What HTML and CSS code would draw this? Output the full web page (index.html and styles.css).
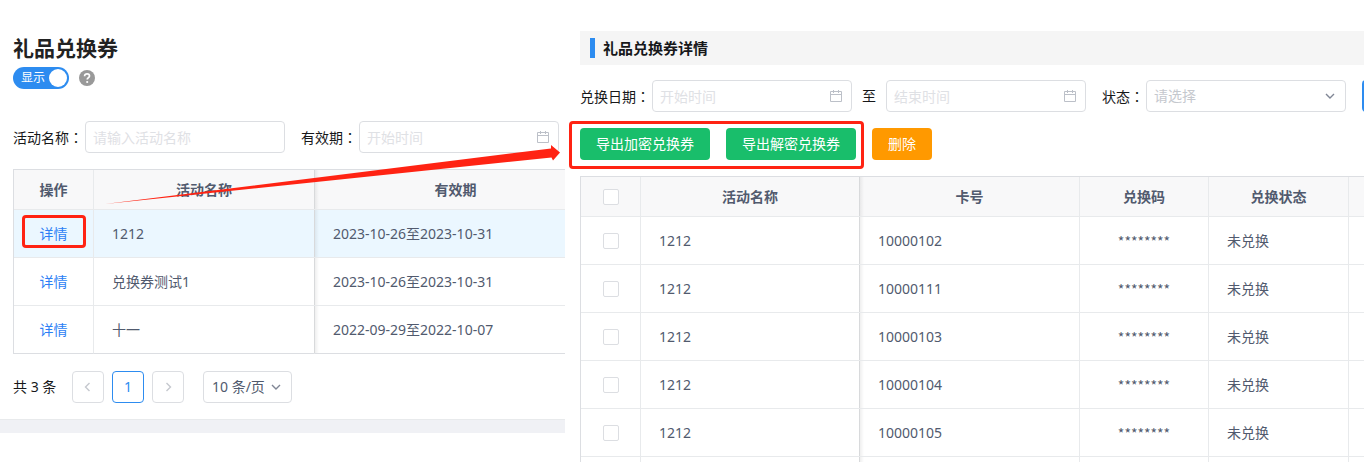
FILE: index.html
```
<!DOCTYPE html>
<html lang="zh-CN">
<head>
<meta charset="utf-8">
<title>礼品兑换券</title>
<link rel="stylesheet" href="styles.css">
</head>
<body>
<div class="page">

    <div class="list">
        <div class="list-content">
            <h1>礼品兑换券</h1>
            <div class="switch-row">
                <label class="switch">
                    <input type="checkbox" checked>
                    <span>显示</span>
                </label>
                <svg class="help" viewBox="0 0 16 16">
                    <circle cx="8" cy="8" r="8" fill="#999"/>
                    <path d="M5.6 6.2C5.6 4.6 6.6 3.8 8.1 3.8S10.5 4.7 10.5 5.9C10.5 7.5 8.2 7.7 8.2 9.6" fill="none" stroke="#fff" stroke-width="1.7"/>
                    <circle cx="8.2" cy="12" r="1.1" fill="#fff"/>
                </svg>
            </div>

            <div class="form">
                <div class="field">
                    <label for="name">活动名称<span class="colon" lang="zh-TW">：</span></label>
                    <input id="name" type="text" placeholder="请输入活动名称">
                </div>
                <div class="field">
                    <label for="valid">有效期<span class="colon" lang="zh-TW">：</span></label>
                    <div class="date">
                        <input id="valid" type="text" placeholder="开始时间">
                        <svg viewBox="0 0 14 14"><path d="M1.5 2.500h11v10h-11zM1.500 5.500h11M4.500 1v3M9.500 1v3"/></svg>
                    </div>
                </div>
            </div>

            <div class="table-box">
                <table class="coupons">
                    <colgroup><col class="col-action"><col class="col-coupon"><col class="col-valid"></colgroup>
                    <thead>
                        <tr><th>操作</th><th class="fixed">活动名称</th><th>有效期</th></tr>
                    </thead>
                    <tbody>
                        <tr class="hover">
                            <td class="center"><a class="marked" href="#">详情</a></td>
                            <td class="fixed">1212</td>
                            <td>2023-10-26至2023-10-31</td>
                        </tr>
                        <tr>
                            <td class="center"><a href="#">详情</a></td>
                            <td class="fixed">兑换券测试1</td>
                            <td>2023-10-26至2023-10-31</td>
                        </tr>
                        <tr>
                            <td class="center"><a href="#">详情</a></td>
                            <td class="fixed">十一</td>
                            <td>2022-09-29至2022-10-07</td>
                        </tr>
                    </tbody>
                </table>
            </div>

            <div class="pager">
                <span class="total">共 3 条</span>
                <button type="button" aria-label="上一页"><svg viewBox="0 0 10 10"><path d="M6.5 1L2.5 5l4 4"/></svg></button>
                <button type="button" class="active">1</button>
                <button type="button" aria-label="下一页"><svg viewBox="0 0 10 10"><path d="M3.5 1l4 4-4 4"/></svg></button>
                <div class="select page-size">
                    <select aria-label="每页条数"><option>10 条/页</option></select>
                    <svg viewBox="0 0 10 10"><path d="M1 3l4 4 4-4"/></svg>
                </div>
            </div>
        </div>
        <div class="list-footer"></div>
    </div>

    <div class="detail">
        <h2>礼品兑换券详情</h2>

        <div class="form">
            <div class="field">
                <label for="start">兑换日期<span class="colon" lang="zh-TW">：</span></label>
                <div class="date">
                    <input id="start" type="text" placeholder="开始时间">
                    <svg viewBox="0 0 14 14"><path d="M1.500 2.500h11v10h-11zM1.500 5.500h11M4.500 1v3M9.500 1v3"/></svg>
                </div>
                <label class="to" for="end">至</label>
                <div class="date">
                    <input id="end" type="text" placeholder="结束时间">
                    <svg viewBox="0 0 14 14"><path d="M1.500 2.500h11v10h-11zM1.500 5.500h11M4.500 1v3M9.500 1v3"/></svg>
                </div>
            </div>
            <div class="field">
                <label for="status">状态<span class="colon" lang="zh-TW">：</span></label>
                <div class="select status">
                    <select id="status"><option>请选择</option></select>
                    <svg viewBox="0 0 10 10"><path d="M1 3l4 4 4-4"/></svg>
                </div>
            </div>
            <button type="button" class="btn search" aria-label="搜索"></button>
        </div>

        <div class="actions">
            <div class="exports">
                <button type="button" class="btn green">导出加密兑换券</button>
                <button type="button" class="btn green">导出解密兑换券</button>
            </div>
            <button type="button" class="btn orange">删除</button>
        </div>

        <div class="table-box">
            <table class="cards">
                <colgroup><col class="col-check"><col class="col-name"><col class="col-card"><col class="col-code"><col class="col-status"><col class="col-rest"></colgroup>
                <thead>
                    <tr><th><input type="checkbox" aria-label="全选"></th><th class="fixed">活动名称</th><th>卡号</th><th>兑换码</th><th>兑换状态</th><th></th></tr>
                </thead>
                <tbody>
                    <tr><td class="center"><input type="checkbox" aria-label="选择"></td><td class="fixed">1212</td><td>10000102</td><td class="code">********</td><td>未兑换</td><td></td></tr>
                    <tr><td class="center"><input type="checkbox" aria-label="选择"></td><td class="fixed">1212</td><td>10000111</td><td class="code">********</td><td>未兑换</td><td></td></tr>
                    <tr><td class="center"><input type="checkbox" aria-label="选择"></td><td class="fixed">1212</td><td>10000103</td><td class="code">********</td><td>未兑换</td><td></td></tr>
                    <tr><td class="center"><input type="checkbox" aria-label="选择"></td><td class="fixed">1212</td><td>10000104</td><td class="code">********</td><td>未兑换</td><td></td></tr>
                    <tr><td class="center"><input type="checkbox" aria-label="选择"></td><td class="fixed">1212</td><td>10000105</td><td class="code">********</td><td>未兑换</td><td></td></tr>
                    <tr><td></td><td class="fixed"></td><td></td><td></td><td></td><td></td></tr>
                </tbody>
            </table>
        </div>
    </div>

    <!-- arrow from the detail link to the export buttons -->
    <svg class="arrow" viewBox="0 0 456 60">
        <path d="M0 59L446 3.5V0L455 7.5L448 15.5L446.5 12.5Z"/>
    </svg>
</div>
</body>
</html>
```
FILE: styles.css
```
* {
    box-sizing: border-box;
}

body {
    margin: 0;
    background: #fff;
    color: #17181a;
    font-family: "Noto Sans", "Noto Sans CJK SC", sans-serif;
    font-size: 14px;
    line-height: 20px;
}

input, select, button {
    font-family: inherit;
    font-size: 14px;
    line-height: 20px;
}

.page {
    position: relative;
    display: grid;
    grid-template-columns: 565fr 799fr;
    align-items: start;
    height: 100vh;
    overflow: hidden;
}

.list {
    min-width: 0;
    padding-top: 34px;
}

.list-content {
    padding: 0 0 16px 13px;
}

h1 {
    margin: 0 0 4px;
    font-size: 21px;
    line-height: 29px;
    color: #222;
}

.switch-row {
    display: flex;
    align-items: center;
    gap: 10px;
    margin-bottom: 32px;
}

.switch {
    display: flex;
    align-items: center;
    width: 56px;
    height: 22px;
    padding: 0 2px 0 8px;
    border-radius: 11px;
    background: #2d8cf0;
    color: #fff;
    font-size: 12px;
}

.switch input {
    order: 2;
    appearance: none;
    width: 18px;
    height: 18px;
    margin: 0 0 0 auto;
    border-radius: 50%;
    background: #fff;
}

.help {
    width: 16px;
    height: 16px;
}

.form {
    display: flex;
    gap: 16px;
    margin-bottom: 16px;
    white-space: nowrap;
}

.field {
    display: flex;
    flex-shrink: 0;
    align-items: center;
    gap: 2px;
}

.colon {
    font-family: "Noto Sans CJK TC", sans-serif;
}

.to {
    padding: 0 8px;
}

.field input, .select select {
    display: block;
    width: 200px;
    height: 32px;
    padding: 0 7px;
    border: 1px solid #dcdee2;
    border-radius: 4px;
    background: #fff;
    color: #515a6e;
}

.field input::placeholder {
    color: #dfe1e5;
    opacity: 1;
}

.date, .select {
    position: relative;
}

.date svg {
    position: absolute;
    top: 9px;
    right: 9px;
    width: 14px;
    height: 14px;
    fill: none;
    stroke: #bcc0c8;
}

.select select {
    appearance: none;
}

.select svg {
    position: absolute;
    top: 11px;
    right: 11px;
    width: 10px;
    height: 10px;
    fill: none;
    stroke: #808695;
    stroke-width: 1.4;
}

.select .status, .status select {
    color: #c5c8ce;
}

.table-box {
    overflow: hidden;
}

table {
    table-layout: fixed;
    border-collapse: separate;
    border-spacing: 0;
    border-top: 1px solid #dcdee2;
    border-left: 1px solid #dcdee2;
    color: #515a6e;
}

.coupons {
    width: 584px;
}

.cards {
    width: 889px;
}

.col-action {
    width: 80px;
}

.col-coupon {
    width: 221px;
}

.col-check {
    width: 60px;
}

.col-name {
    width: 219px;
}

.col-card {
    width: 220px;
}

.col-code {
    width: 129px;
}

.col-status {
    width: 140px;
}

th, td {
    height: 48px;
    padding: 0 18px;
    border-right: 1px solid #e8eaec;
    border-bottom: 1px solid #e8eaec;
    text-align: left;
}

th {
    height: 40px;
    background: #f8f8f9;
    text-align: center;
}

.coupons tr:last-child td {
    border-bottom-color: #dcdee2;
}

.center, .code {
    text-align: center;
}

.code {
    font-family: "Noto Sans CJK SC", sans-serif;
}

.hover td {
    background: #ebf7ff;
}

/* shadow on the edge of the fixed columns */
.fixed {
    position: relative;
}

.fixed::after {
    content: "";
    position: absolute;
    top: 0;
    bottom: 0;
    left: 100%;
    width: 5px;
    background: linear-gradient(to right, rgba(0, 0, 0, 0.08), rgba(0, 0, 0, 0));
}

table input {
    appearance: none;
    display: block;
    width: 16px;
    height: 16px;
    margin: 0 auto;
    border: 1px solid #dcdee2;
    border-radius: 2px;
    background: #fff;
}

th:first-child, .center {
    padding: 0;
}

a {
    color: #2d7ff5;
    text-decoration: none;
}

.marked {
    position: relative;
}

.marked::after, .exports::after {
    content: "";
    position: absolute;
    border: 3px solid #ff2313;
    border-radius: 4px;
}

.marked::after {
    inset: -9px -18px -5px;
}

.pager {
    display: flex;
    align-items: center;
    gap: 8px;
    margin-top: 17px;
}

.total {
    min-width: 45px;
    margin-right: 6px;
}

.pager button {
    display: flex;
    align-items: center;
    justify-content: center;
    width: 32px;
    height: 32px;
    padding: 0;
    border: 1px solid #dcdee2;
    border-radius: 4px;
    background: #fff;
}

.pager button svg {
    width: 10px;
    height: 10px;
    fill: none;
    stroke: #c5c8ce;
    stroke-width: 1.4;
}

.pager .active {
    border-color: #2d8cf0;
    color: #2d8cf0;
}

.page-size {
    margin-left: 11px;
}

.page-size select {
    width: 89px;
    padding: 0 8px;
}

.list-footer {
    height: 14px;
    border-top: 1px solid #e8eaec;
    background: #f0f1f5;
}

.detail {
    min-width: 0;
    padding: 31px 0 0 15px;
}

h2 {
    display: flex;
    align-items: center;
    gap: 8px;
    height: 34px;
    margin: 0 0 15px;
    padding-left: 10px;
    background: #f5f5f5;
    font-size: 15px;
}

h2::before {
    content: "";
    width: 5px;
    height: 20px;
    background: #2d8cf0;
}

.detail .form {
    overflow: hidden;
}

.btn {
    height: 32px;
    padding: 0 16px;
    border: 0;
    border-radius: 4px;
    color: #fff;
}

.green {
    background: #19be6b;
}

.orange {
    background: #f90;
}

.search {
    flex-shrink: 0;
    background: #2d8cf0;
}

.actions, .exports {
    display: flex;
    gap: 16px;
}

.actions {
    margin-bottom: 16px;
}

.exports {
    position: relative;
}

.exports::after {
    inset: -7px -8px -9px -11px;
}

.arrow {
    position: absolute;
    top: 145px;
    left: 105px;
    width: 456px;
    height: 60px;
    fill: #ff2313;
}
```
